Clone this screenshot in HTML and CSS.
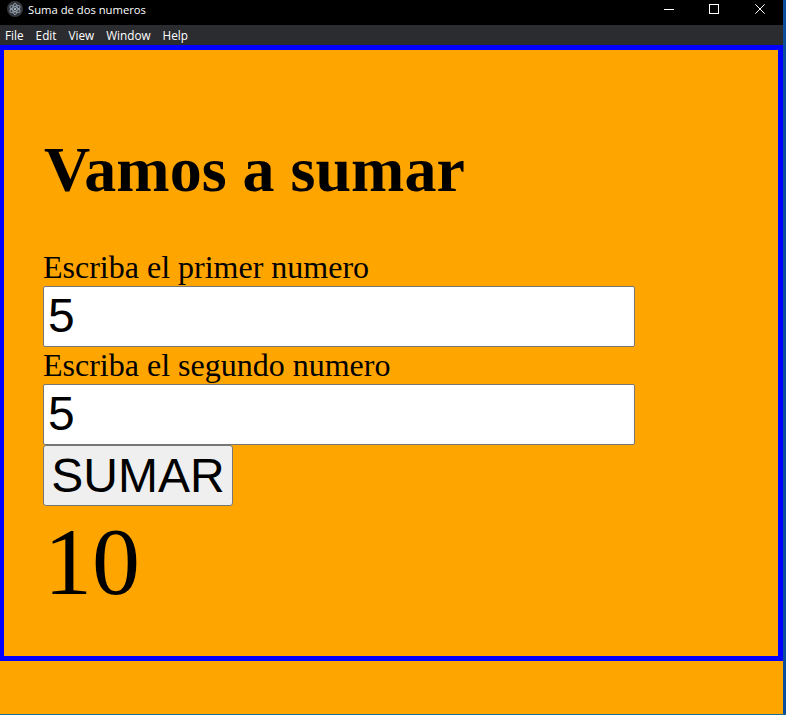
FILE: index.html
```html
<!DOCTYPE html>
<html lang="es">
<head>
<meta charset="utf-8">
<title>Suma de dos numeros</title>
<link rel="stylesheet" href="styles.css">
</head>
<body>
<div class="desktop">
  <div class="window">
    <header class="titlebar">
      <svg class="app-icon" width="16" height="16" viewBox="0 0 16 16" aria-hidden="true">
        <circle cx="8" cy="8" r="8" fill="#33363c"/>
        <g fill="none" stroke="#8f9ca8" stroke-width="1">
          <ellipse cx="8" cy="8" rx="5.6" ry="2.3" transform="rotate(30 8 8)"/>
          <ellipse cx="8" cy="8" rx="5.6" ry="2.3" transform="rotate(90 8 8)"/>
          <ellipse cx="8" cy="8" rx="5.6" ry="2.3" transform="rotate(150 8 8)"/>
        </g>
        <circle cx="8" cy="8" r="1" fill="#c8d2da"/>
      </svg>
      <span class="title">Suma de dos numeros</span>
      <div class="controls">
        <span class="control">
          <svg width="10" height="10" viewBox="0 0 10 10" aria-hidden="true"><path d="M0 5.5H10" stroke="#fff" stroke-width="1"/></svg>
        </span>
        <span class="control">
          <svg width="10" height="10" viewBox="0 0 10 10" aria-hidden="true"><rect x=".5" y=".5" width="9" height="9" fill="none" stroke="#fff" stroke-width="1"/></svg>
        </span>
        <span class="control">
          <svg width="10" height="10" viewBox="0 0 10 10" aria-hidden="true"><path d="M.3 .3L9.7 9.7M9.7 .3L.3 9.7" stroke="#fff" stroke-width="1"/></svg>
        </span>
      </div>
    </header>
    <nav class="menubar">
      <span class="menu-item">File</span>
      <span class="menu-item">Edit</span>
      <span class="menu-item">View</span>
      <span class="menu-item">Window</span>
      <span class="menu-item">Help</span>
    </nav>
    <div class="viewport">
      <main class="panel">
        <h1 class="heading">Vamos a sumar</h1>
        <form class="sum-form">
          <label class="field-label" for="a">Escriba el primer numero</label>
          <input class="field" id="a" type="text" value="5">
          <label class="field-label" for="b">Escriba el segundo numero</label>
          <input class="field" id="b" type="text" value="5">
          <button class="submit" type="button">SUMAR</button>
        </form>
        <div class="result">10</div>
      </main>
    </div>
  </div>
  <div class="edge"></div>
</div>
</body>
</html>
```

FILE: styles.css
```css
html, body {
  margin: 0;
  padding: 0;
  height: 100%;
  overflow: hidden;
}

.desktop {
  display: flex;
  flex-direction: column;
  flex-wrap: wrap;
  width: 786px;
  height: 715px;
  background: #0b4f9c;
  border-bottom: 1px solid #14708f;
  box-sizing: border-box;
}

.window {
  display: flex;
  flex-direction: column;
  width: 783px;
  height: 714px;
}

.titlebar {
  box-sizing: border-box;
  display: flex;
  align-items: center;
  flex: none;
  height: 25px;
  padding-bottom: 7px;
  background: #000;
  color: #fff;
  font: 11.25px "Open Sans", "Noto Sans", sans-serif;
}

.app-icon {
  flex: none;
  margin: 0 5px 0 7px;
}

.title {
  flex: 1;
  white-space: nowrap;
}

.controls {
  display: flex;
  align-self: flex-start;
}

.control {
  display: flex;
  justify-content: center;
  width: 46px;
  padding-top: 4px;
}

.control:first-child {
  width: 44px;
}

.menubar {
  box-sizing: border-box;
  display: flex;
  align-items: center;
  flex: none;
  gap: 12px;
  height: 20px;
  padding: 0 0 1px 5px;
  background: #2b2c30;
  color: #fff;
  font: 11.75px "Open Sans", "Noto Sans", sans-serif;
}

.viewport {
  flex: 1;
  background: #ffa500;
}

.panel {
  box-sizing: border-box;
  height: 616px;
  padding: 83px 0 0 39px;
  border-style: solid;
  border-color: #00f;
  border-width: 5px 5px 5px 4px;
  font-family: "Liberation Serif", serif;
  color: #000;
}

.heading {
  margin: 0 0 42px;
  padding-left: 1px;
  font-size: 64px;
  font-weight: bold;
  line-height: 74px;
}

.sum-form {
  display: flex;
  flex-direction: column;
  align-items: flex-start;
}

.field-label {
  font-size: 32px;
  line-height: 37px;
}

.field {
  box-sizing: border-box;
  width: 592px;
  height: 61px;
  padding: 0 4px 2px;
  border: 1px solid #767676;
  border-radius: 2px;
  background: #fff;
  font: 48px "Liberation Sans", sans-serif;
  color: #000;
  outline: none;
}

.submit {
  box-sizing: border-box;
  width: 190px;
  height: 61px;
  padding: 0;
  border: 1px solid #767676;
  border-radius: 3px;
  background: #efefef;
  font: 48px "Liberation Sans", sans-serif;
  color: #000;
}

.result {
  margin: 1px 0 0 1px;
  font-size: 96px;
  line-height: 110px;
}

.edge {
  width: 3px;
  height: 714px;
}
```
